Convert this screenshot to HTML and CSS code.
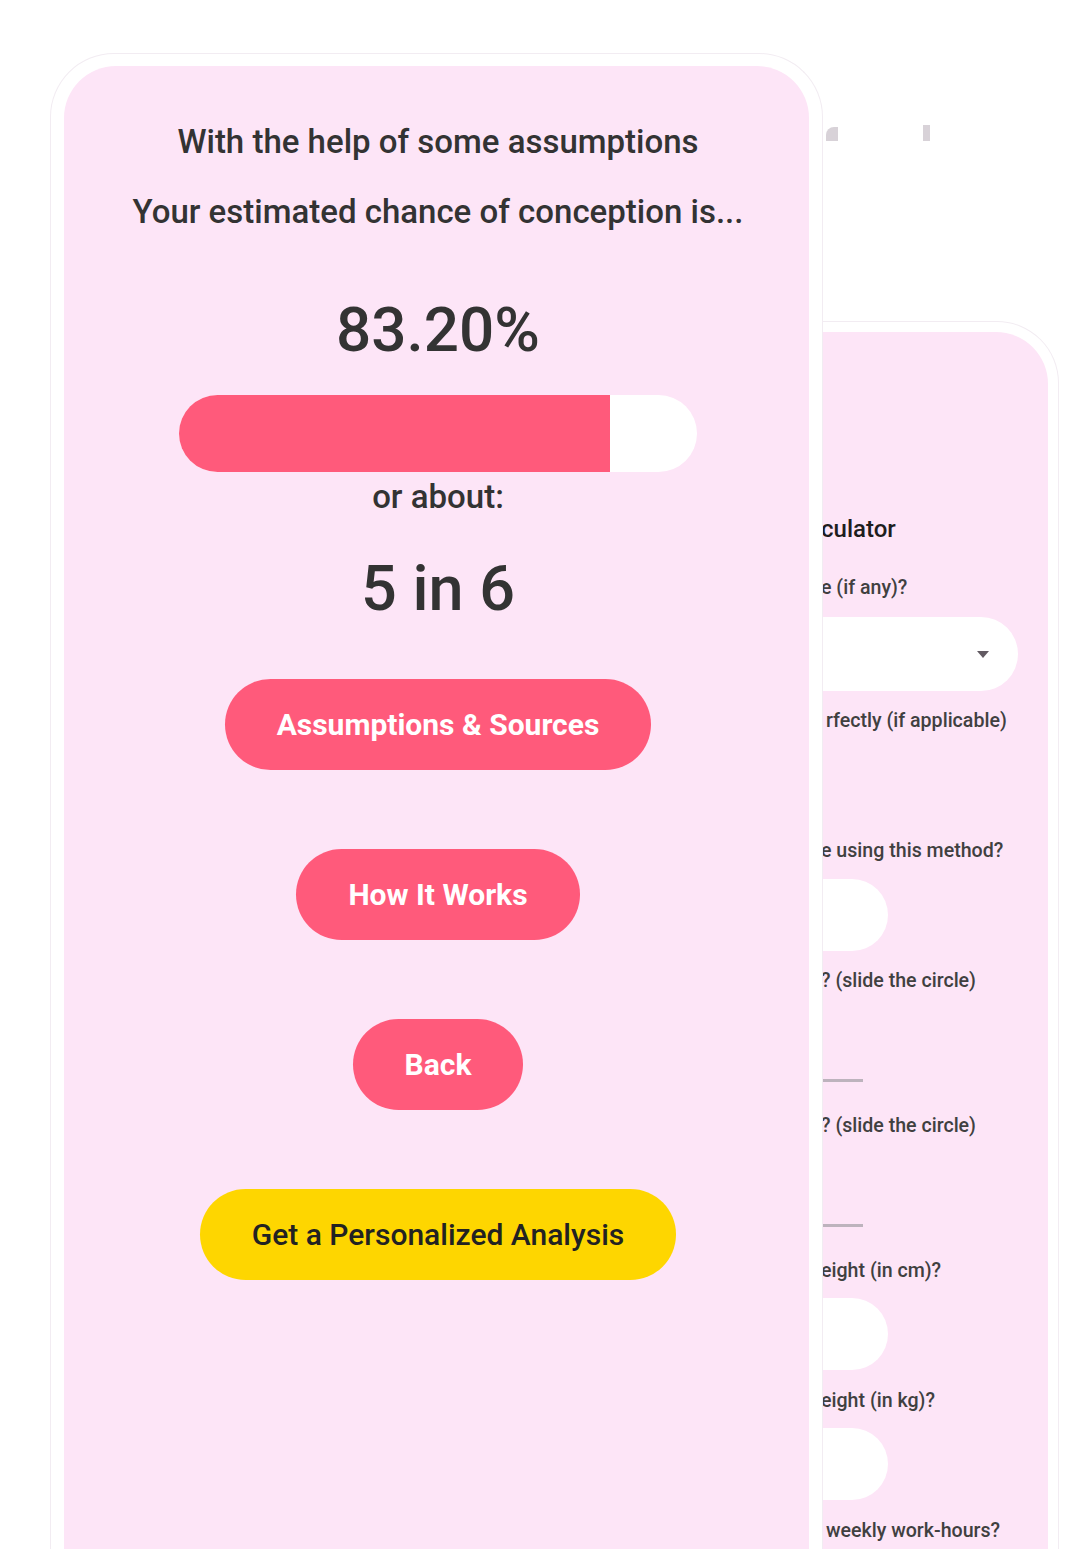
FILE: index.html
```html
<!DOCTYPE html>
<html lang="en">
<head>
<meta charset="utf-8">
<title>Conception chance result</title>
<link rel="stylesheet" href="styles.css">
</head>
<body>
<div class="stage">
  <div class="phone phone-back">
    <div class="screen screen-back">
      <p class="q title">culator</p>
      <p class="q q-1">e (if any)?</p>
      <div class="field select"><span class="caret"></span></div>
      <p class="q q-in q-2">rfectly (if applicable)</p>
      <p class="q q-3">e using this method?</p>
      <div class="field input"></div>
      <p class="q q-4">? (slide the circle)</p>
      <div class="slider"></div>
      <p class="q q-5">? (slide the circle)</p>
      <div class="slider"></div>
      <p class="q q-6">eight (in cm)?</p>
      <div class="field input"></div>
      <p class="q q-7">eight (in kg)?</p>
      <div class="field input"></div>
      <p class="q q-in q-8">weekly work-hours?</p>
    </div>
  </div>

  <span class="ghost ghost-a"></span>
  <span class="ghost ghost-b"></span>

  <div class="phone phone-front">
    <div class="screen screen-front">
      <p class="lead">With the help of some assumptions</p>
      <p class="lead lead-2">Your estimated chance of conception is...</p>
      <p class="pct">83.20%</p>
      <div class="bar"><div class="bar-fill" style="width: 83.2%"></div></div>
      <p class="about">or about:</p>
      <p class="ratio">5 in 6</p>
      <div class="actions">
        <button class="btn">Assumptions &amp; Sources</button>
        <button class="btn">How It Works</button>
        <button class="btn">Back</button>
        <button class="btn btn-yellow">Get a Personalized Analysis</button>
      </div>
    </div>
  </div>
</div>
</body>
</html>
```

FILE: styles.css
```css
* { box-sizing: border-box; }

html, body {
  margin: 0;
  padding: 0;
  background: #ffffff;
}

body {
  font-family: Roboto, "Liberation Sans", Arial, sans-serif;
}

.stage {
  position: relative;
  width: 1078px;
  height: 1549px;
  overflow: hidden;
  background: #ffffff;
}

/* ---------- phones ---------- */
.phone {
  position: absolute;
  background: #ffffff;
  border: 1px solid #f2ecf2;
  border-bottom: none;
}

.screen {
  height: 100%;
  background: #fde5f7;
}

.phone-front {
  left: 50px;
  top: 53px;
  width: 773px;
  height: 1560px;
  padding: 12px 13px 0 13px;
  border-radius: 64px 64px 0 0;
  z-index: 2;
}

.screen-front {
  border-radius: 52px 52px 0 0;
  display: flex;
  flex-direction: column;
  align-items: center;
  padding: 56px 0 0 3px;
  color: #333333;
}

.phone-back {
  left: 560px;
  top: 321px;
  width: 499px;
  height: 1300px;
  padding: 10px 10px 0 10px;
  border-radius: 62px 62px 0 0;
  z-index: 1;
}

.screen-back {
  border-radius: 52px 52px 0 0;
  padding: 0 30px 0 30px;
  display: flex;
  flex-direction: column;
  align-items: flex-start;
  color: #404040;
}

/* ---------- front screen ---------- */
.lead {
  margin: 0;
  font-size: 33px;
  font-weight: 500;
  line-height: 40px;
  text-align: center;
}

.lead-2 {
  margin-top: 30px;
}

.pct {
  margin: 61px 0 0;
  font-size: 62px;
  font-weight: 500;
  line-height: 74px;
}

.bar {
  margin-top: 28px;
  width: 518px;
  height: 77px;
  border-radius: 39px;
  background: #ffffff;
  overflow: hidden;
}

.bar-fill {
  height: 100%;
  background: #ff5a7b;
}

.about {
  margin: 5px 0 0;
  font-size: 33px;
  font-weight: 500;
  line-height: 40px;
}

.ratio {
  margin: 35px 0 0;
  font-size: 63px;
  font-weight: 500;
  line-height: 74px;
}

.actions {
  margin-top: 53px;
  display: flex;
  flex-direction: column;
  align-items: center;
  gap: 79px;
}

.btn {
  display: block;
  height: 91px;
  padding: 0 52px;
  border: none;
  border-radius: 46px;
  background: #ff5a7b;
  color: #ffffff;
  font-family: Roboto, "Liberation Sans", Arial, sans-serif;
  font-size: 30px;
  font-weight: 700;
  line-height: 91px;
}

.btn-yellow {
  background: #fed600;
  color: #222222;
  font-weight: 500;
}

/* ---------- back screen ---------- */
.q {
  margin: 0;
  padding-left: 220px;
  font-size: 19.6px;
  font-weight: 500;
  line-height: 26px;
  white-space: nowrap;
}

.q-in {
  padding-left: 225px;
}

.title {
  margin-top: 182px;
  font-size: 24px;
  line-height: 30px;
  color: #1e1e1e;
}

.q-1 { margin-top: 31px; }
.q-2 { margin-top: 17px; }
.q-3 { margin-top: 104px; }
.q-4 { margin-top: 17px; }
.q-5 { margin-top: 31px; }
.q-6 { margin-top: 31px; }
.q-7 { margin-top: 18px; }
.q-8 { margin-top: 18px; }

.field {
  background: #ffffff;
  border-radius: 37px;
}

.select {
  margin-top: 16px;
  width: 100%;
  height: 74px;
  display: flex;
  align-items: center;
  justify-content: flex-end;
  padding-right: 29px;
}

.caret {
  width: 0;
  height: 0;
  border-left: 6px solid transparent;
  border-right: 6px solid transparent;
  border-top: 7px solid #625a62;
}

.input {
  margin-top: 15px;
  width: 287px;
  height: 72px;
}

.q-6 + .input,
.q-7 + .input {
  margin-top: 14px;
}

.slider {
  margin-top: 85px;
  width: 262px;
  height: 3px;
  background: #bdb3bd;
}

/* faint leftover marks above the back phone */
.ghost {
  position: absolute;
  background: #d8d2d8;
  z-index: 3;
}

.ghost-a {
  left: 826px;
  top: 127px;
  width: 12px;
  height: 14px;
  border-radius: 8px 0 0 0;
}

.ghost-b {
  left: 923px;
  top: 125px;
  width: 7px;
  height: 16px;
}
```
